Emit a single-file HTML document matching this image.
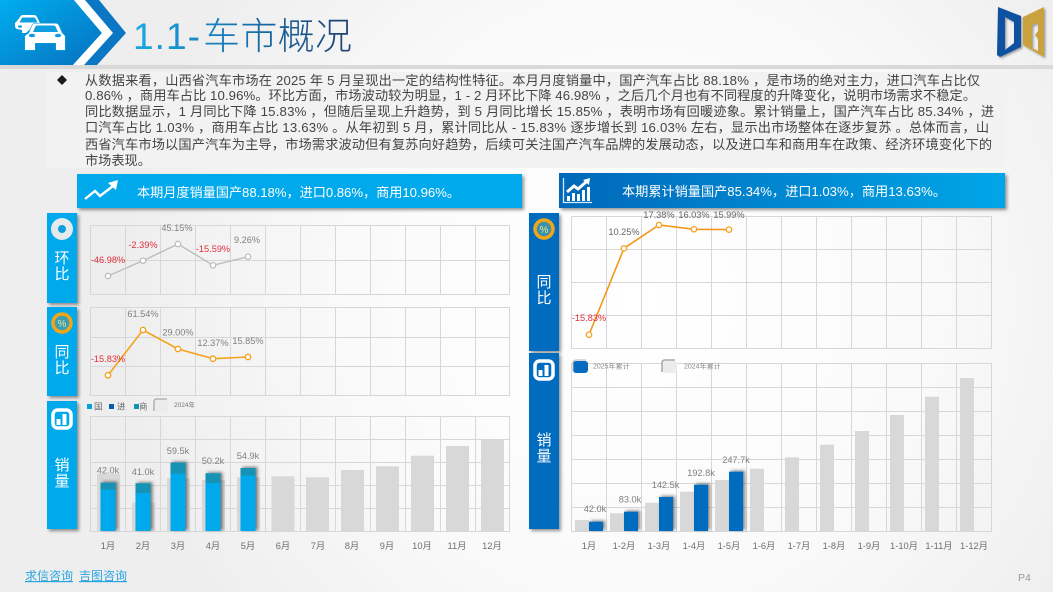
<!DOCTYPE html>
<html lang="zh"><head><meta charset="utf-8"><title>1.1-车市概况</title>
<style>
html,body{margin:0;padding:0;width:1053px;height:592px;overflow:hidden;background:#f1f1f2}
svg{display:block}
text{font-family:"Liberation Sans","Noto Sans CJK SC",sans-serif}
.p{font-size:13.2px;fill:#444}
.l{font-size:9.2px;fill:#808080;text-anchor:middle}
.r{font-size:9.2px;fill:#e0303a;text-anchor:middle}
.m{font-size:9.300px;fill:#6e6e6e;text-anchor:middle}
.s{font-size:15px;fill:#fff;text-anchor:middle}
.b{font-size:13.2px;fill:#fff}
.g{fill:none;stroke:#d7d7d9;stroke-width:1}
</style></head><body>
<svg width="1053" height="592" viewBox="0 0 1053 592" xmlns="http://www.w3.org/2000/svg">
<defs>
<radialGradient id="bg" gradientUnits="userSpaceOnUse" cx="640" cy="300" r="520"><stop offset="0" stop-color="#fff"/><stop offset=".55" stop-color="#fafafa"/><stop offset="1" stop-color="#eeeeef"/></radialGradient>
<linearGradient id="hd" x1="0" y1="0" x2="1" y2="1"><stop offset="0" stop-color="#00aeef"/><stop offset="1" stop-color="#0670bf"/></linearGradient>
<linearGradient id="tt" gradientUnits="userSpaceOnUse" x1="133" y1="0" x2="352" y2="0"><stop offset="0" stop-color="#17a9e4"/><stop offset=".45" stop-color="#1577b5"/><stop offset="1" stop-color="#20406f"/></linearGradient>
<linearGradient id="bn" x1="0" y1="0" x2="1" y2="0"><stop offset="0" stop-color="#0468b9"/><stop offset="1" stop-color="#00a6e8"/></linearGradient>
<filter id="sh" x="-20%" y="-20%" width="150%" height="150%"><feDropShadow dx="2" dy="2" stdDeviation="1.6" flood-color="#000" flood-opacity=".42"/></filter>
<filter id="bs" x="-40%" y="-20%" width="190%" height="140%"><feDropShadow dx="2" dy="-1" stdDeviation="1.5" flood-color="#000" flood-opacity=".5"/></filter>
<filter id="ls" x="-20%" y="-20%" width="150%" height="150%"><feDropShadow dx="1.500" dy="1.500" stdDeviation="1" flood-color="#000" flood-opacity=".35"/></filter>
</defs>
<rect width="1053" height="592" fill="url(#bg)"/>
<rect x="0" y="65" width="1053" height="4" fill="#d9d9da"/>
<rect x="47" y="72" width="958" height="96" fill="#f2f2f3"/>

<!-- header -->
<polygon points="0,0 74,0 102,33 73,65 0,65" fill="url(#hd)"/>
<polygon points="74,0 85,0 113,33 84,65 73,65 102,33" fill="#fff"/>
<polygon points="85,0 99,0 126,33 97,65 84,65 113,33" fill="#0a76c4"/>
<!-- cars -->
<path d="M20 17q1-2 3-2h11q2 0 3 2l3 6 2 2v3H31l-5 5h-4v-3l-5-1q-2-1-2-3v-3l2-2z" fill="#fff"/>
<path d="M21.500 18.500q.5-1 1.500-1h11q1 0 1.500 1l2 4H19.500z" fill="#0f9fe0"/>
<ellipse cx="20" cy="26.500" rx="2" ry="1.300" fill="#0f9fe0"/>
<path d="M32 26q1-2.500 3.500-2.500h20q2.500 0 3.500 2.500l3 7 3 3v14h-9v-7H35v7h-10V36l4-3z" fill="#fff" stroke="#0f9fe0" stroke-width="1.200" paint-order="stroke"/>
<path d="M33 32l2.500-5.500q.5-1 1.500-1h17q1 0 1.500 1L58 32z" fill="#0f9fe0"/>
<ellipse cx="32" cy="35.500" rx="3.200" ry="1.800" fill="#0f9fe0"/>
<ellipse cx="58" cy="35.500" rx="3.200" ry="1.800" fill="#0f9fe0"/>
<text x="133" y="49" font-size="37" font-weight="300" fill="url(#tt)" textLength="67" lengthAdjust="spacing">1.1-</text>
<text x="203" y="49" font-size="37" font-weight="300" fill="url(#tt)" textLength="149" lengthAdjust="spacing">车市概况</text>

<!-- logo -->
<g filter="url(#ls)">
<path d="M998 7l23 9v31l-21 10-3-2zM1005 17v33l9-7V22z" fill="#0b51a0" fill-rule="evenodd"/>
<path d="M1044 7L1023 17v28l21 12zM1032 25v23l6 3V39l-3-4 3-4V23z" fill="#c9a23c" fill-rule="evenodd"/>
</g>

<!-- paragraph -->
<path d="M62 75l5 5-5 5-5-5z" fill="#1a1a1a"/>
<text class="p" x="85" y="85" textLength="895" lengthAdjust="spacing">从数据来看，山西省汽车市场在 2025 年 5 月呈现出一定的结构性特征。本月月度销量中，国产汽车占比 88.18% ，是市场的绝对主力，进口汽车占比仅</text>
<text class="p" x="85" y="100" textLength="891" lengthAdjust="spacing">0.86% ，商用车占比 10.96%。环比方面，市场波动较为明显，1 - 2 月环比下降 46.98% ，之后几个月也有不同程度的升降变化，说明市场需求不稳定。</text>
<text class="p" x="85" y="116" textLength="909" lengthAdjust="spacing">同比数据显示，1 月同比下降 15.83% ，但随后呈现上升趋势，到 5 月同比增长 15.85% ，表明市场有回暖迹象。累计销量上，国产汽车占比 85.34% ，进</text>
<text class="p" x="85" y="132" textLength="904" lengthAdjust="spacing">口汽车占比 1.03% ，商用车占比 13.63% 。从年初到 5 月，累计同比从 - 15.83% 逐步增长到 16.03% 左右，显示出市场整体在逐步复苏 。总体而言，山</text>
<text class="p" x="85" y="149" textLength="907" lengthAdjust="spacing">西省汽车市场以国产汽车为主导，市场需求波动但有复苏向好趋势，后续可关注国产汽车品牌的发展动态，以及进口车和商用车在政策、经济环境变化下的</text>
<text class="p" x="85" y="165">市场表现。</text>

<!-- banners -->
<rect x="77" y="174" width="445" height="34" fill="#00a9ec" filter="url(#sh)"/>
<path d="M85 199l10-8 5 5 13-10" fill="none" stroke="#fff" stroke-width="2.400"/>
<path d="M108 183l10-3-2 10z" fill="#fff"/>
<text class="b" x="137" y="197" textLength="323" lengthAdjust="spacing">本期月度销量国产88.18%，进口0.86%，商用10.96%。</text>
<rect x="559" y="173" width="446" height="35" fill="url(#bn)" filter="url(#sh)"/>
<path d="M563.500 178v24.500H592" fill="none" stroke="#d8e8f5" stroke-width="1.300"/>
<path d="M567 192l7-6 4 3 8-7" fill="none" stroke="#fff" stroke-width="3"/>
<path d="M583 180l7-2-1 7z" fill="#fff"/>
<path d="M567 196h3v5h-3zM572 193h3v8h-3zM577 194h3v7h-3zM582 190h3v11h-3zM587 187h3v14h-3z" fill="#fff"/>
<text class="b" x="622" y="196" textLength="324" lengthAdjust="spacing">本期累计销量国产85.34%，进口1.03%，商用13.63%。</text>

<!-- side panels -->
<g filter="url(#sh)" fill="#00a9ec">
<rect x="47" y="213" width="30" height="90"/>
<rect x="47" y="307" width="30" height="89"/>
<rect x="47" y="401" width="30" height="128"/>
</g>
<g filter="url(#sh)" fill="#046cc0">
<rect x="529" y="213" width="30" height="138"/>
<rect x="529" y="353" width="30" height="176"/>
</g>
<circle cx="62" cy="229" r="11" fill="#e6eaec"/><circle cx="62" cy="229" r="4" fill="#0aa0dd"/>
<circle cx="62" cy="323" r="9" fill="#3b9fb0" stroke="#f2a516" stroke-width="3.500"/><text x="62" y="327" font-size="10" text-anchor="middle" fill="#e8e4a0">%</text>
<rect x="53" y="410" width="18" height="18" rx="4.500" fill="none" stroke="#fff" stroke-width="3.500"/><path d="M56.500 419h4v6h-4zM62.500 414h4v11h-4z" fill="#fff"/>
<circle cx="544" cy="229" r="9" fill="#3b91a8" stroke="#f2a516" stroke-width="3.500"/><text x="544" y="233" font-size="10" text-anchor="middle" fill="#e8e4a0">%</text>
<rect x="535" y="361" width="18" height="18" rx="4.500" fill="none" stroke="#fff" stroke-width="3.500"/><path d="M538.500 370h4v6h-4zM544.500 365h4v11h-4z" fill="#fff"/>
<text class="s" x="62" y="263">环</text><text class="s" x="62" y="279">比</text>
<text class="s" x="62" y="357">同</text><text class="s" x="62" y="373">比</text>
<text class="s" x="62" y="470">销</text><text class="s" x="62" y="486">量</text>
<text class="s" x="544" y="287">同</text><text class="s" x="544" y="303">比</text>
<text class="s" x="544" y="445">销</text><text class="s" x="544" y="461">量</text>

<!-- grids left -->
<path class="g" d="M90.500 225V294.500M125.500 225V294.500M160.500 225V294.500M195.500 225V294.500M230.500 225V294.500M265.500 225V294.500M300.500 225V294.500M335.500 225V294.500M370.500 225V294.500M405.500 225V294.500M440.500 225V294.500M475.500 225V294.500M509.500 225V294.500M90 225.500H510M90 260.500H510M90 294.500H510"/>
<path class="g" d="M90.500 307V396M125.500 307V396M160.500 307V396M195.500 307V396M230.500 307V396M265.500 307V396M300.500 307V396M335.500 307V396M370.500 307V396M405.500 307V396M440.500 307V396M475.500 307V396M509.500 307V396M90 307.500H510M90 337.500H510M90 366.500H510M90 395.500H510"/>
<path class="g" d="M90.500 416V531M125.500 416V531M160.500 416V531M195.500 416V531M230.500 416V531M265.500 416V531M300.500 416V531M335.500 416V531M370.500 416V531M405.500 416V531M440.500 416V531M475.500 416V531M509.500 416V531M90 416.500H510M90 439.500H510M90 462.500H510M90 485.500H510M90 508.500H510M90 531.500H510"/>

<!-- grids right -->
<path class="g" d="M571.500 216V348.500M606.500 216V348.500M641.500 216V348.500M676.500 216V348.500M711.500 216V348.500M746.500 216V348.500M781.500 216V348.500M816.500 216V348.500M851.500 216V348.500M886.500 216V348.500M921.500 216V348.500M956.500 216V348.500M991.500 216V348.500M571 216.500H992M571 249.500H992M571 282.500H992M571 315.500H992M571 348.500H992"/>
<path class="g" d="M571.500 363V531M606.500 363V531M641.500 363V531M676.500 363V531M711.500 363V531M746.500 363V531M781.500 363V531M816.500 363V531M851.500 363V531M886.500 363V531M921.500 363V531M956.500 363V531M991.500 363V531M571 363.500H992M571 387.500H992M571 411.500H992M571 435.500H992M571 459.500H992M571 483.500H992M571 507.500H992M571 531.500H992"/>

<!-- chart1 -->
<path d="M108 276L143 260.700 178 244 213 265.300 248 256.700" fill="none" stroke="#bdbdbd" stroke-width="1.400"/>
<g fill="#fff" stroke="#bdbdbd" stroke-width="1.300"><circle cx="108" cy="276" r="2.700"/><circle cx="143" cy="260.700" r="2.700"/><circle cx="178" cy="244" r="2.700"/><circle cx="213" cy="265.300" r="2.700"/><circle cx="248" cy="256.700" r="2.700"/></g>
<text class="r" x="108" y="263">-46.98%</text><text class="r" x="143" y="248">-2.39%</text><text class="l" x="177" y="231">45.15%</text><text class="r" x="213" y="252">-15.59%</text><text class="l" x="247" y="243">9.26%</text>

<!-- chart2 -->
<path d="M108 375.300L143 330 178 349 213 358.700 248 357" fill="none" stroke="#f4a21c" stroke-width="1.600"/>
<g fill="#fff" stroke="#f4a21c" stroke-width="1.400"><circle cx="108" cy="375.300" r="2.700"/><circle cx="143" cy="330" r="2.700"/><circle cx="178" cy="349" r="2.700"/><circle cx="213" cy="358.700" r="2.700"/><circle cx="248" cy="357" r="2.700"/></g>
<text class="r" x="108" y="362">-15.83%</text><text class="l" x="143" y="317">61.54%</text><text class="l" x="178" y="335.500">29.00%</text><text class="l" x="213" y="346">12.37%</text><text class="l" x="248" y="344">15.85%</text>

<!-- chart3 gray -->
<g fill="#d8d8d8">
<rect x="97" y="474" width="23" height="57"/><rect x="132" y="502.700" width="23" height="28.300"/><rect x="167" y="478.300" width="23" height="52.700"/><rect x="202" y="480" width="23" height="51"/><rect x="237" y="477.300" width="23" height="53.700"/>
<rect x="271.500" y="476.300" width="23" height="54.700"/><rect x="306" y="477.300" width="23" height="53.700"/><rect x="341" y="470" width="23" height="61"/><rect x="376" y="466.300" width="23" height="64.700"/><rect x="411" y="455.700" width="23" height="75.300"/><rect x="446" y="446" width="23" height="85"/><rect x="481" y="440" width="23" height="91"/>
</g>
<g filter="url(#bs)">
<rect x="100.500" y="482.700" width="15" height="48.300" fill="#00a9ec"/><rect x="135.500" y="483.300" width="15" height="47.700" fill="#00a9ec"/><rect x="170.500" y="462.700" width="15" height="68.300" fill="#00a9ec"/><rect x="205.500" y="473.300" width="15" height="57.700" fill="#00a9ec"/><rect x="240.500" y="468" width="15" height="63" fill="#00a9ec"/>
</g>
<g fill="#1693b4"><rect x="100.500" y="482.700" width="15" height="7"/><rect x="135.500" y="483.300" width="15" height="9.700"/><rect x="170.500" y="462.700" width="15" height="11"/><rect x="205.500" y="473.300" width="15" height="9.700"/><rect x="240.500" y="468" width="15" height="7.700"/></g>
<text class="l" x="108" y="473.500">42.0k</text><text class="l" x="143" y="475">41.0k</text><text class="l" x="178" y="454">59.5k</text><text class="l" x="213" y="464">50.2k</text><text class="l" x="248" y="459">54.9k</text>
<g><text class="m" x="108" y="549">1月</text><text class="m" x="143" y="549">2月</text><text class="m" x="178" y="549">3月</text><text class="m" x="213" y="549">4月</text><text class="m" x="248" y="549">5月</text><text class="m" x="283" y="549">6月</text><text class="m" x="318" y="549">7月</text><text class="m" x="352" y="549">8月</text><text class="m" x="387" y="549">9月</text><text class="m" x="422" y="549">10月</text><text class="m" x="457" y="549">11月</text><text class="m" x="492" y="549">12月</text></g>

<!-- legend left -->
<rect x="87" y="404" width="5" height="5" fill="#00a3dc"/><text x="94" y="409.500" font-size="8.500" fill="#666">国</text>
<rect x="109" y="404" width="5" height="5" fill="#0a5da8"/><text x="117" y="409.500" font-size="8.500" fill="#666">进</text>
<rect x="134" y="404" width="5" height="5" fill="#1693b4"/><text x="139" y="409.500" font-size="8.500" fill="#666">商</text>
<rect x="153" y="399" width="15" height="13" rx="3" fill="#ececec"/><path d="M154 411v-9q0-3 3-3h10" fill="none" stroke="#a8a8a8" stroke-width="1.300"/>
<text x="174" y="407" font-size="6.500" fill="#777">2024年</text>

<!-- right line chart -->
<path d="M589 334.700L624 248.300 659 225 694 229.300 729 229.600" fill="none" stroke="#f4981c" stroke-width="1.600"/>
<g fill="#fff" stroke="#f4a21c" stroke-width="1.300"><circle cx="589" cy="334.700" r="2.700"/><circle cx="624" cy="248.300" r="2.700"/><circle cx="659" cy="225" r="2.700"/><circle cx="694" cy="229.300" r="2.700"/><circle cx="729" cy="229.600" r="2.700"/></g>
<text class="l" x="659" y="218" style="fill:#666">17.38%</text><text class="l" x="694" y="218" style="fill:#666">16.03%</text><text class="l" x="729" y="218" style="fill:#666">15.99%</text><text class="l" x="624" y="235" style="fill:#666">10.25%</text><text class="r" x="589" y="321">-15.83%</text>

<!-- legend right -->
<rect x="573" y="361" width="15" height="12" rx="3" fill="#046cc0"/><path d="M573 371v-8q0-3 3-3h10" fill="none" stroke="#b5b5b5" stroke-width="1"/>
<text x="593" y="368.500" font-size="7" fill="#888">2025年累计</text>
<rect x="662" y="361" width="15" height="12" rx="3" fill="#ececec"/><path d="M662 372v-9q0-3 3-3h10" fill="none" stroke="#a8a8a8" stroke-width="1.500"/>
<text x="684" y="368.500" font-size="7" fill="#888">2024年累计</text>

<!-- right bars -->
<g fill="#d8d8d8">
<rect x="575" y="520" width="14" height="11"/><rect x="610" y="513.300" width="14" height="17.700"/><rect x="645" y="502.700" width="14" height="28.300"/><rect x="680" y="491.700" width="14" height="39.300"/><rect x="715" y="480" width="14" height="51"/><rect x="750" y="468.700" width="14" height="62.300"/><rect x="785" y="457.300" width="14" height="73.700"/><rect x="820" y="444.700" width="14" height="86.300"/><rect x="855" y="431" width="14" height="100"/><rect x="890" y="415" width="14" height="116"/><rect x="925" y="396.700" width="14" height="134.300"/><rect x="960" y="378" width="14" height="153"/>
</g>
<g fill="#046cc0" filter="url(#bs)">
<rect x="589" y="521.700" width="14" height="9.300"/><rect x="624" y="511.700" width="14" height="19.300"/><rect x="659" y="497" width="14" height="34"/><rect x="694" y="484.700" width="14" height="46.300"/><rect x="729" y="471.700" width="14" height="59.300"/>
</g>
<text class="l" x="595" y="512">42.0k</text><text class="l" x="630" y="502.500">83.0k</text><text class="l" x="665.500" y="488">142.5k</text><text class="l" x="701" y="476">192.8k</text><text class="l" x="736" y="463">247.7k</text>
<text class="m" x="589" y="549">1月</text><text class="m" x="624" y="549">1-2月</text><text class="m" x="659" y="549">1-3月</text><text class="m" x="694" y="549">1-4月</text><text class="m" x="729" y="549">1-5月</text><text class="m" x="764" y="549">1-6月</text><text class="m" x="799" y="549">1-7月</text><text class="m" x="834" y="549">1-8月</text><text class="m" x="869" y="549">1-9月</text><text class="m" x="904" y="549">1-10月</text><text class="m" x="939" y="549">1-11月</text><text class="m" x="974" y="549">1-12月</text>

<!-- footer -->
<text x="25" y="580" font-size="12" fill="#2aa5e0" text-decoration="underline">求信咨询</text>
<text x="79" y="580" font-size="12" fill="#2aa5e0" text-decoration="underline">吉图咨询</text>
<text x="1018" y="581" font-size="10.500" fill="#999">P4</text>
</svg>
</body></html>
